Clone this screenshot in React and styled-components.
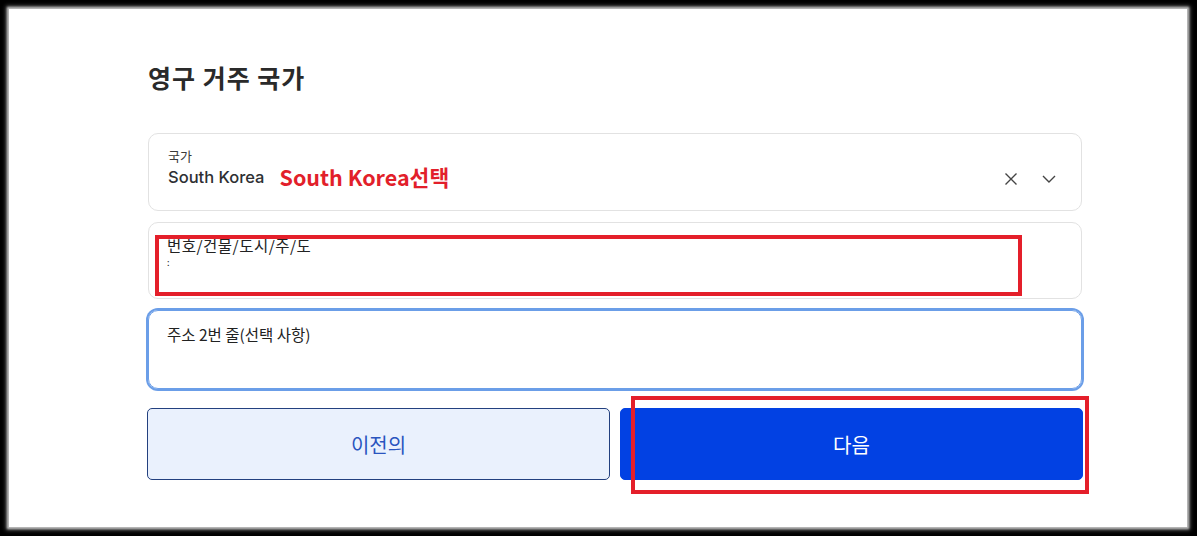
import React from "react";
import styled, { createGlobalStyle } from "styled-components";

const GlobalStyle = createGlobalStyle`
  html, body {
    margin: 0;
    padding: 0;
    background: #000;
  }
  body {
    font-family: "Noto Sans CJK KR", "Noto Sans", sans-serif;
  }
`;

const Frame = styled.div`
  width: 1197px;
  height: 536px;
  padding: 9px 10px 9px 9px;
  box-sizing: border-box;
`;

const Sheet = styled.div`
  height: 100%;
  background: #fff;
  box-shadow: 0 0 2px 2px #bbb, 0 0 4px 3px #666;
  padding: 50px 105px 0 139px;
  box-sizing: border-box;
`;

const Title = styled.h1`
  margin: 0;
  font-size: 25px;
  line-height: 36px;
  font-weight: 700;
  color: #2a2a2a;
  letter-spacing: 1px;
`;

const Fields = styled.div`
  margin-top: 38px;
  display: flex;
  flex-direction: column;
  gap: 11px;
`;

const Field = styled.div`
  position: relative;
  box-sizing: border-box;
  height: ${(p) => p.$h}px;
  border: 1px solid ${(p) => (p.$focused ? "#6b9ee8" : "#e2e2e2")};
  box-shadow: ${(p) => (p.$focused ? "0 0 0 2px #6b9ee8" : "none")};
  border-radius: 10px;
  padding: ${(p) => p.$pad};
  display: flex;
  align-items: flex-start;
`;

const FieldBody = styled.div`
  flex: 1;
  display: flex;
  flex-direction: column;
`;

const Label = styled.div`
  font-size: 13px;
  line-height: 18px;
  color: #3a3a3a;
`;

const ValueRow = styled.div`
  display: flex;
  align-items: center;
  gap: 15px;
  margin-top: 0;
`;

const Value = styled.div`
  font-family: Inter, "Noto Sans CJK KR", sans-serif;
  font-size: 16.5px;
  font-weight: 500;
  line-height: 24px;
  color: #2e2f33;
`;

const Note = styled.span`
  font-family: "Noto Sans CJK KR", sans-serif;
  font-size: 21.5px;
  font-weight: 700;
  line-height: 24px;
  color: #e21f2b;
`;

const Placeholder = styled.div`
  font-size: 15.5px;
  line-height: 20px;
  letter-spacing: ${(p) => p.$spacing || 0}px;
  color: #222;
`;

const Crumb = styled.div`
  font-size: 9px;
  line-height: 10px;
  color: #222;
  margin-top: 3px;
`;

const Controls = styled.div`
  display: flex;
  align-items: center;
  gap: 24px;
  align-self: center;
  color: #444;
`;

const Highlight = styled.div`
  position: absolute;
  left: ${(p) => p.$x}px;
  top: ${(p) => p.$y}px;
  width: ${(p) => p.$w}px;
  height: ${(p) => p.$hh}px;
  border: 4px solid #e41f2a;
  box-sizing: border-box;
  pointer-events: none;
  z-index: 2;
`;

const Actions = styled.div`
  margin-top: 19px;
  display: grid;
  grid-template-columns: 1fr 1fr;
  gap: 10px;
  margin-left: -1px;
  margin-right: -1px;
`;

const Button = styled.button`
  position: relative;
  height: 72px;
  border-radius: 5px;
  border: 1px solid ${(p) => (p.$primary ? "#0241e3" : "#23407f")};
  background: ${(p) => (p.$primary ? "#0241e3" : "#eaf1fd")};
  color: ${(p) => (p.$primary ? "#fff" : "#2a55bf")};
  font-family: "Noto Sans CJK KR", sans-serif;
  font-size: 20px;
  font-weight: 400;
  cursor: pointer;
`;

const ClearIcon = () => (
  <svg width="14" height="14" viewBox="0 0 14 14" fill="none" stroke="currentColor" strokeWidth="1.4">
    <path d="M1.5 1.5L12.5 12.5M12.5 1.5L1.5 12.5" />
  </svg>
);

const ChevronIcon = () => (
  <svg width="14" height="8" viewBox="0 0 14 8" fill="none" stroke="currentColor" strokeWidth="1.4">
    <path d="M1 1L7 7L13 1" />
  </svg>
);

export default function App() {
  return (
    <>
      <GlobalStyle />
      <Frame>
        <Sheet>
          <Title>영구 거주 국가</Title>
          <Fields>
            <Field $h={78} $pad="13px 25px 0 19px">
              <FieldBody>
                <Label>국가</Label>
                <ValueRow>
                  <Value>South Korea</Value>
                  <Note>South Korea선택</Note>
                </ValueRow>
              </FieldBody>
              <Controls>
                <ClearIcon />
                <ChevronIcon />
              </Controls>
            </Field>
            <Field $h={77} $pad="12px 19px 0 18px">
              <FieldBody>
                <Placeholder $spacing={0.5}>번호/건물/도시/주/도</Placeholder>
                <Crumb>:</Crumb>
              </FieldBody>
              <Highlight $x={6} $y={12} $w={867} $hh={61} />
            </Field>
            <Field $h={79} $focused $pad="13px 19px 0 18px">
              <Placeholder>주소 2번 줄(선택 사항)</Placeholder>
            </Field>
          </Fields>
          <Actions>
            <Button>이전의</Button>
            <Button $primary>
              다음
              <Highlight $x={10} $y={-13} $w={458} $hh={98} />
            </Button>
          </Actions>
        </Sheet>
      </Frame>
    </>
  );
}
